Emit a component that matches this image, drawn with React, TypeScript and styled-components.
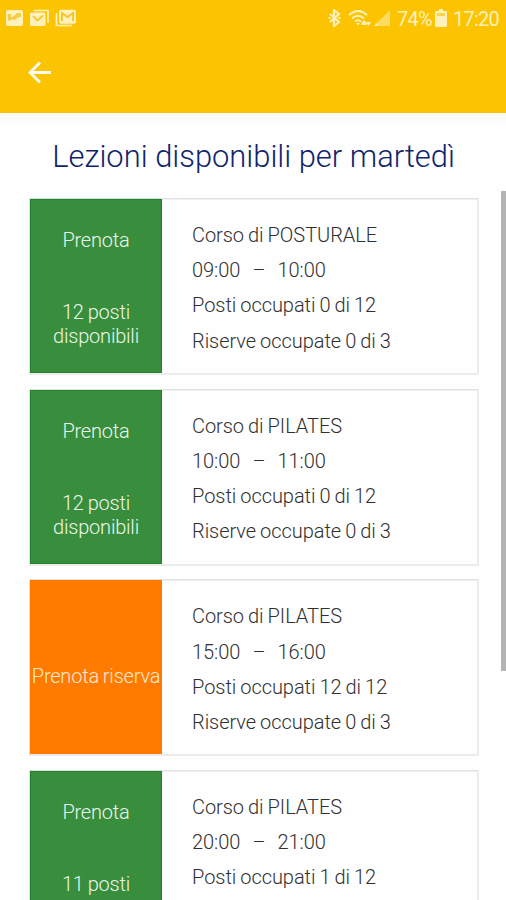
import React from 'react';
import styled, { createGlobalStyle } from 'styled-components';

const GlobalStyle = createGlobalStyle`
  * { box-sizing: border-box; }
  html, body { margin: 0; height: 100%; overflow: hidden; background: #fff; }
  body { font-family: Roboto, "Liberation Sans", sans-serif; font-weight: 300; }
`;

const Screen = styled.div`
  position: relative;
  display: flex;
  flex-direction: column;
  height: 900px;
  width: 506px;
  overflow: hidden;
  background: #fefefe;
`;

const Header = styled.header`
  flex: none;
  height: 113px;
  background: #fcc400;
  color: #fff0bc;
`;

const StatusBar = styled.div`
  display: flex;
  justify-content: space-between;
  align-items: center;
  height: 36px;
  padding: 0 7px 0 5px;
`;

const StatusGroup = styled.div<{ $gap: number }>`
  display: flex;
  align-items: center;
  gap: ${(p) => p.$gap}px;
`;

const StatusText = styled.span<{ $width: number }>`
  width: ${(p) => p.$width}px;
  padding-top: 2px;
  font-size: 20px;
  font-weight: 400;
  line-height: 36px;
  letter-spacing: -0.75px;
  white-space: nowrap;
`;

const BackButton = styled.button`
  display: flex;
  margin: 24px 0 0 27px;
  padding: 0;
  border: 0;
  background: none;
`;

const Title = styled.h1`
  flex: none;
  height: 85px;
  margin: 0;
  padding: 24px 0 0 1px;
  background: linear-gradient(#fafafc, #fefefe 14px);
  color: #10246c;
  font-size: 30.9px;
  font-weight: 300;
  line-height: 40px;
  text-align: center;
  white-space: nowrap;
`;

const LessonList = styled.main`
  display: flex;
  flex-direction: column;
  gap: 13.7px;
  padding: 0 27px 0 29px;
`;

const Card = styled.article`
  display: flex;
  flex: none;
  height: 177px;
  border: 1px solid #e0e0e0;
  border-right: 2px solid #ececec;
  border-bottom: 2px solid #ececec;
`;

const Action = styled.button<{ $reserve: boolean }>`
  display: flex;
  flex-direction: column;
  align-items: center;
  justify-content: ${(p) => (p.$reserve ? 'center' : 'flex-start')};
  gap: 48px;
  width: 132px;
  padding: ${(p) => (p.$reserve ? '17px 0 0' : '28px 0 0')};
  border: 1px solid ${(p) => (p.$reserve ? '#ff7800' : '#208328')};
  background: ${(p) => (p.$reserve ? '#ff7b00' : '#388e3c')};
  color: ${(p) => (p.$reserve ? '#ffe9d4' : '#ebf7eb')};
  font: 300 20px/24px Roboto, "Liberation Sans", sans-serif;
  letter-spacing: -0.2px;
  word-spacing: -0.8px;
  white-space: nowrap;
`;

const Details = styled.div`
  flex: 1;
  padding: 19px 0 0 30px;
  box-shadow: inset 0 1px #f0f0f0;
  color: #303030;
  font-size: 20px;
  line-height: 35.2px;
  letter-spacing: -0.05px;
  word-spacing: -0.8px;
  white-space: pre;
`;

const ScrollThumb = styled.div`
  position: absolute;
  top: 191px;
  right: 0;
  width: 5px;
  height: 480px;
  background: #b3b3b3;
`;

const lessons = [
  { course: 'POSTURALE', start: '09:00', end: '10:00', taken: 0, free: 12 },
  { course: 'PILATES', start: '10:00', end: '11:00', taken: 0, free: 12 },
  { course: 'PILATES', start: '15:00', end: '16:00', taken: 12, free: 0 },
  { course: 'PILATES', start: '20:00', end: '21:00', taken: 1, free: 11 },
];

const PictureIcon = () => (
  <svg width="19" height="18" viewBox="0 0 19 18">
    <rect x="1" y="1" width="17" height="16" rx="2" fill="#fff0bc" />
    <path d="M3 11V5h3v3h2l4-4h4v4h-2l-3 2-2 1-2-1-2 2z" fill="#f5cc48" />
  </svg>
);

const MailIcon = () => (
  <svg width="21" height="18" viewBox="0 0 21 18">
    <path d="M5 1.500h14v12.500" fill="none" stroke="#fff0bc" strokeWidth="1.700" />
    <rect x="1" y="3.500" width="15.500" height="13.500" rx="1.500" fill="#fff0bc" />
    <path d="M4 7l4.500 4.500L14 6.500" fill="none" stroke="#f8c529" strokeWidth="1.700" />
  </svg>
);

const GmailIcon = () => (
  <svg width="22" height="18" viewBox="0 0 22 18">
    <path d="M1.500 4v12.500H17" fill="none" stroke="#fff0bc" strokeWidth="1.700" />
    <rect x="4" y="0.700" width="17" height="14" rx="2" fill="#fff0bc" />
    <path d="M7 12V4l5.500 4L18 4v8" fill="none" stroke="#f8c529" strokeWidth="1.900" />
  </svg>
);

const BluetoothIcon = () => (
  <svg width="13" height="18" viewBox="0 0 13 18" fill="none" stroke="#fff0bc" strokeWidth="2.200">
    <path d="M2 5l9 8-5 4V1l5 4-9 8" />
    <path d="M0.500 9h2M10.500 9h2" />
  </svg>
);

const WifiIcon = () => (
  <svg width="24" height="18" viewBox="0 0 24 18" fill="none" stroke="#fff0bc" strokeWidth="2">
    <path d="M1 6Q10-2 19 6M4 9.500q6-5.500 12 0M7 12.500q3-2.500 6 0" />
    <path d="M8 14h4l-2 2.500z" fill="#fff0bc" stroke="none" />
    <path d="M13.500 14l2.500-3 2.500 3v2h-5zM18 13h5l-2.500 4z" fill="#fff0bc" stroke="none" />
  </svg>
);

const SignalIcon = () => (
  <svg width="18" height="18" viewBox="0 0 18 18">
    <path d="M17 1v16H1z" fill="#fddb62" />
    <path d="M5 13.500V17H1z" fill="#fff0bc" />
  </svg>
);

const BatteryIcon = () => (
  <svg width="12" height="18" viewBox="0 0 12 18">
    <path d="M4 0h4v2h3q1 0 1 1v14q0 1-1 1H1q-1 0-1-1V3q0-1 1-1h3z" fill="#fff0bc" />
    <path d="M2 4h8v3H2z" fill="#fbd449" />
  </svg>
);

const BackArrow = () => (
  <svg width="26" height="24" viewBox="0 0 26 24" fill="none" stroke="#fffdf2" strokeWidth="2.800">
    <path d="M24 12.500H3M13 2.500l-10 10 10 10" />
  </svg>
);

export default function App() {
  return (
    <>
      <GlobalStyle />
      <Screen>
        <Header>
          <StatusBar>
            <StatusGroup $gap={5}>
              <PictureIcon />
              <MailIcon />
              <GmailIcon />
            </StatusGroup>
            <StatusGroup $gap={6}>
              <StatusGroup $gap={7}>
                <BluetoothIcon />
                <StatusGroup $gap={1}>
                  <WifiIcon />
                  <SignalIcon />
                </StatusGroup>
              </StatusGroup>
              <StatusGroup $gap={4}>
                <StatusText $width={34}>74%</StatusText>
                <BatteryIcon />
              </StatusGroup>
              <StatusText $width={46}>17:20</StatusText>
            </StatusGroup>
          </StatusBar>
          <BackButton aria-label="Indietro">
            <BackArrow />
          </BackButton>
        </Header>
        <Title>Lezioni disponibili per martedì</Title>
        <LessonList>
          {lessons.map((lesson) => (
            <Card key={lesson.start}>
              <Action $reserve={lesson.free === 0}>
                {lesson.free === 0 ? (
                  <span>Prenota riserva</span>
                ) : (
                  <>
                    <span>Prenota</span>
                    <span>
                      {lesson.free} posti
                      <br />
                      disponibili
                    </span>
                  </>
                )}
              </Action>
              <Details>
                <div>Corso di {lesson.course}</div>
                <div>{`${lesson.start}   –   ${lesson.end}`}</div>
                <div>Posti occupati {lesson.taken} di 12</div>
                <div>Riserve occupate 0 di 3</div>
              </Details>
            </Card>
          ))}
        </LessonList>
        <ScrollThumb />
      </Screen>
    </>
  );
}
